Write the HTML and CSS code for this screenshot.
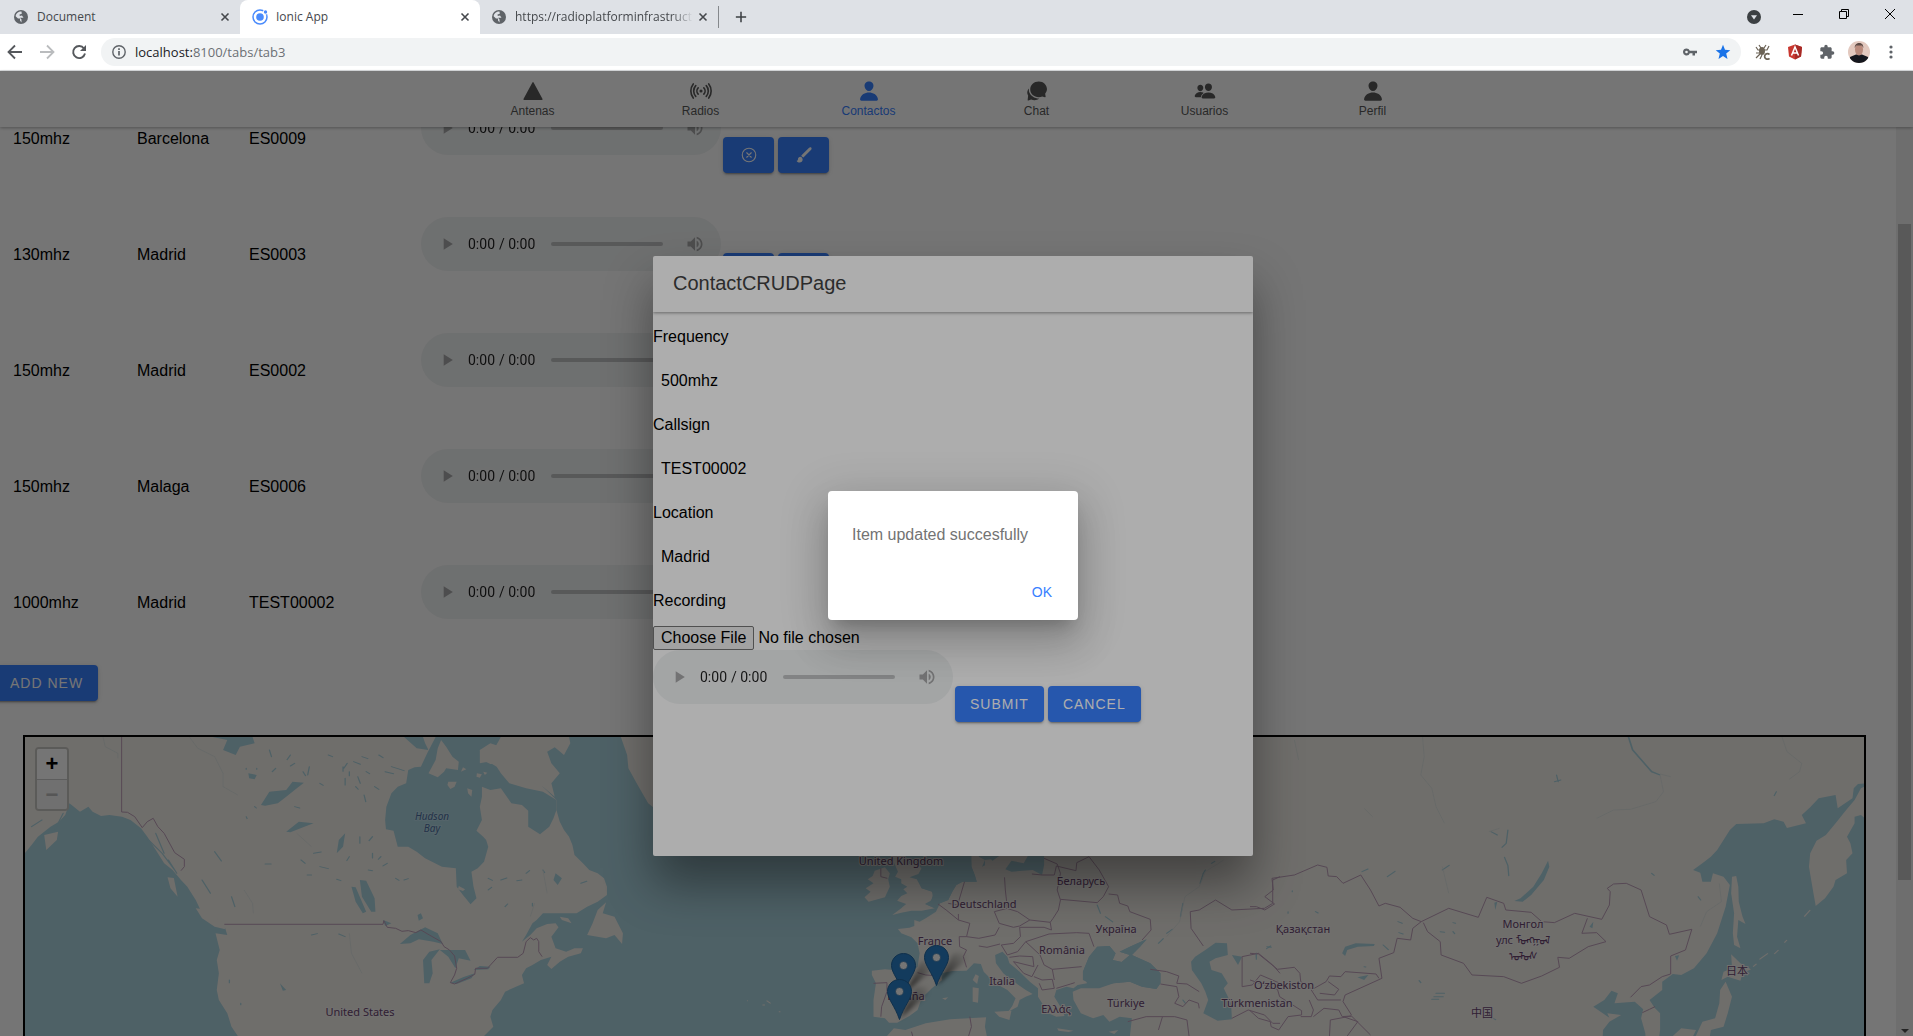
FILE: index.html
```html
<!DOCTYPE html>
<html lang="es">
<head>
<meta charset="utf-8">
<title>Ionic App</title>
<link rel="stylesheet" href="styles.css">
</head>
<body>
<svg class="defs" aria-hidden="true">
  <defs>
    <symbol id="i-globe" viewBox="0 0 14 14"><circle cx="7" cy="7" r="7" fill="#5f6368"/><path d="M7.500 1.500C4.500 1.400 2 3.500 1.600 6.200L4 8.500H6V10.500L7.500 12.500V9.500L6 7.800H9.500L8 5.500L5.800 6L5.500 4.500L7.800 3.800Z" fill="#dee1e6"/></symbol>
    <symbol id="i-x" viewBox="0 0 10 10"><path d="M1.500 1.500L8.500 8.500M8.500 1.500L1.500 8.500" stroke="#45484c" stroke-width="1.600"/></symbol>
    <symbol id="i-person" viewBox="0 0 512 512"><path d="M332.640 64.580C313.180 43.570 286 32 256 32c-30.160 0-57.430 11.500-76.800 32.380-19.580 21.110-29.120 49.800-26.880 80.780C156.760 206.280 203.270 256 256 256s99.160-49.710 103.670-110.820c2.270-30.700-7.330-59.330-27.030-80.600zM432 480H80a31 31 0 01-24.200-11.130c-6.500-7.770-9.120-18.380-7.180-29.110C57.060 392.940 83.400 353.610 124.800 326c36.780-24.510 83.370-38 131.200-38s94.420 13.500 131.200 38c41.400 27.600 67.740 66.930 76.180 113.750 1.940 10.730-.68 21.340-7.180 29.110A31 31 0 01432 480z"/></symbol>
    <symbol id="i-close" viewBox="0 0 512 512"><g fill="none" stroke="currentColor" stroke-width="32" stroke-linecap="round"><circle cx="256" cy="256" r="192"/><path d="M320 320L192 192M192 320L320 192"/></g></symbol>
    <symbol id="i-brush" viewBox="0 0 512 512"><path fill="currentColor" d="M452 37c-18-10-38-3-51 11L186 262c-6 6-8 15-4 22 11 15 27 30 43 39 7 4 15 3 21-3L460 106c18-19 17-54-8-69zM151 308c-37 0-67 30-67 66 0 29-22 43-36 46-4 1-5 6-2 9 24 28 54 43 84 43 49 0 88-38 88-87 0-44-35-77-67-77z"/></symbol>
    <symbol id="i-pin" viewBox="0 0 25 41"><path d="M12.500 .5C5.500 .5 .5 6 .5 12.500C.5 20 8 27 12.500 40.500C17 27 24.500 20 24.500 12.500C24.500 6 19.500 .5 12.500 .5Z" fill="#2a81cb" stroke="#2468a3"/><circle cx="12.500" cy="12.500" r="4" fill="#fff" stroke="#2468a3" stroke-width=".6"/></symbol>
    <linearGradient id="shade" x1="0" x2="1" y1="1" y2="0"><stop offset="0" stop-opacity=".75"/><stop offset="1" stop-opacity="0"/></linearGradient>
    <filter id="soft" x="-20%" y="-20%" width="140%" height="140%"><feGaussianBlur stdDeviation="2"/></filter>
  </defs>
</svg>

<header class="browser">
  <div class="tabstrip">
    <div class="btab"><svg class="fav"><use href="#i-globe"/></svg><span class="btitle">Document</span><button class="bclose" aria-label="Close tab"><svg><use href="#i-x"/></svg></button></div>
    <div class="btab active"><svg class="fav big" viewBox="0 0 16 16"><circle cx="8" cy="8" r="7" fill="none" stroke="#4a8bfc" stroke-width="1.500"/><circle cx="8" cy="8" r="3.800" fill="#4a8bfc"/><circle cx="13.500" cy="3" r="2.600" fill="#fff"/><circle cx="13.500" cy="3" r="1.700" fill="#4a8bfc"/></svg><span class="btitle">Ionic App</span><button class="bclose" aria-label="Close tab"><svg><use href="#i-x"/></svg></button></div>
    <div class="btab last"><svg class="fav"><use href="#i-globe"/></svg><span class="btitle fade">https://radioplatforminfrastructu</span><button class="bclose" aria-label="Close tab"><svg><use href="#i-x"/></svg></button></div>
    <button class="newtab" aria-label="New tab"><svg viewBox="0 0 14 14"><path d="M7 1V13M1 7H13" stroke="#3c4043" stroke-width="1.800"/></svg></button>
    <div class="winbtns">
      <button aria-label="Search tabs"><svg class="s14" viewBox="0 0 14 14"><circle cx="7" cy="7" r="7" fill="#3c4043"/><path d="M4 5.200H10L7 9.400Z" fill="#dee1e6"/></svg></button>
      <button aria-label="Minimize"><svg class="s14" viewBox="0 0 14 14"><path d="M2 7.500H12" stroke="#000"/></svg></button>
      <button aria-label="Restore"><svg class="s14" viewBox="0 0 14 14"><path d="M2.500 4.500H9.500V11.500H2.500ZM4.500 4.500V2.500H11.500V9.500H9.500" fill="none" stroke="#000"/></svg></button>
      <button aria-label="Close"><svg class="s14" viewBox="0 0 14 14"><path d="M2 2L12 12M12 2L2 12" stroke="#000"/></svg></button>
    </div>
  </div>
  <div class="toolbar">
    <button aria-label="Back"><svg class="s16" viewBox="0 0 16 16"><path d="M15 8H2M8 1.500L1.500 8L8 14.500" fill="none" stroke="#55585c" stroke-width="1.800"/></svg></button>
    <button aria-label="Forward"><svg class="s16" viewBox="0 0 16 16"><path d="M1 8H14M8 1.500L14.500 8L8 14.500" fill="none" stroke="#babcbe" stroke-width="1.800"/></svg></button>
    <button aria-label="Reload"><svg class="s16" viewBox="0 0 16 16"><path d="M13 4.500A6 6 0 1 0 14 9.500" fill="none" stroke="#55585c" stroke-width="1.900"/><path d="M15 1V7H9Z" fill="#55585c"/></svg></button>
    <div class="omnibox">
      <svg class="s14" viewBox="0 0 14 14"><circle cx="7" cy="7" r="6.200" fill="none" stroke="#5f6368" stroke-width="1.400"/><path d="M7 6V10.500M7 3.300V5" stroke="#5f6368" stroke-width="1.700"/></svg>
      <span class="url"><b>localhost:</b>8100/tabs/tab3</span>
      <svg class="s14" viewBox="0 0 14 14"><path d="M3.500 3.500A3.500 3.500 0 1 0 6.800 8.200H9.500V10.500H12V8.200H14V5.800H6.800A3.500 3.500 0 0 0 3.500 3.500Z" fill="#5f6368"/><circle cx="3.500" cy="7" r="1.300" fill="#f1f3f4"/></svg>
      <svg class="s16" viewBox="0 0 16 16"><path d="M8 .8L10 5.800L15.300 6.200L11.200 9.600L12.500 14.900L8 12L3.500 14.900L4.800 9.600L.7 6.200L6 5.800Z" fill="#1a73e8"/></svg>
    </div>
    <button aria-label="Extension"><svg class="s16" viewBox="0 0 16 16"><g fill="none" stroke="#6b6255" stroke-width="1.200"><path d="M4 1L6 4M11 1L9 4M1 3L3 6H6M14 2L12 6H9M1 9H5M1 14L5 10M5 15L7 11"/></g><ellipse cx="7" cy="7" rx="3" ry="4" fill="#6b6255"/><path d="M14.500 10.500A2.800 2.800 0 1 0 14.500 14.300" fill="none" stroke="#6b6255" stroke-width="1.700"/></svg></button>
    <button aria-label="Angular DevTools"><svg class="s16" viewBox="0 0 16 16"><path d="M8 .5L15 3L14 12.500L8 15.500L2 12.500L1 3Z" fill="#c9372f"/><path d="M8 .5L15 3L14 12.500L8 15.500Z" fill="#a62a26"/><path d="M4.500 11.500L8 3L11.500 11.500M5.800 9H10.200" fill="none" stroke="#fff" stroke-width="1.500"/></svg></button>
    <button aria-label="Extensions"><svg class="s16" viewBox="0 0 24 24"><path fill="#5f6368" d="M20.500 11H19V7c0-1.100-.9-2-2-2h-4V3.500a2.500 2.500 0 0 0-5 0V5H4c-1.100 0-2 .9-2 2v3.800h1.500a2.700 2.700 0 0 1 0 5.400H2V20c0 1.100.9 2 2 2h3.800v-1.500a2.700 2.700 0 0 1 5.400 0V22H17c1.100 0 2-.9 2-2v-4h1.500a2.500 2.500 0 0 0 0-5z"/></svg></button>
    <button class="profile" aria-label="Profile"><svg class="s22" viewBox="0 0 22 22"><defs><clipPath id="av"><circle cx="11" cy="11" r="11"/></clipPath></defs><g clip-path="url(#av)"><path fill="#e3c9bf" d="M0 0H22V22H0Z"/><path fill="#15161d" d="M1 22L2 16L8 13.500H14L20 16L22 22Z"/><ellipse cx="11" cy="8.500" rx="4" ry="6" fill="#b98a7c"/><path fill="#5d4a45" d="M6.800 7C6 1 16 0 15.300 7L14 4.500H8Z"/></g></svg></button>
    <button aria-label="Menu"><svg class="s16" viewBox="0 0 16 16"><g fill="#5f6368"><circle cx="8" cy="3" r="1.600"/><circle cx="8" cy="8" r="1.600"/><circle cx="8" cy="13" r="1.600"/></g></svg></button>
  </div>
</header>

<div class="app">
  <nav class="tabbar">
    <a href="#antenas"><svg viewBox="0 0 512 512"><path d="M464 464H48a16 16 0 01-14-24l208-384a16 16 0 0128 0l208 384A16 16 0 01464 464z"/></svg>Antenas</a>
    <a href="#radios"><svg viewBox="0 0 512 512"><circle cx="256" cy="256" r="36"/><path fill="none" stroke="currentColor" stroke-width="38" stroke-linecap="round" d="M190 328a104 104 0 010-144M322 328a104 104 0 000-144M134 380a184 184 0 010-248M378 380a184 184 0 000-248M76 420c-75-95-75-233 0-328M436 420c75-95 75-233 0-328"/></svg>Radios</a>
    <a class="on" href="#contactos"><svg><use href="#i-person"/></svg>Contactos</a>
    <a href="#chat"><svg viewBox="0 0 512 512"><path d="M298 32C185 32 98 115 98 215C98 320 185 400 298 400C330 400 355 392 375 382L440 402C452 404 460 398 457 386L446 318C470 288 488 255 488 212C488 112 408 32 298 32Z"/><path d="M68 196C42 226 24 262 30 308C33 330 42 348 50 362L38 464C37 476 46 482 56 478L120 452C180 482 260 474 306 432C200 432 92 368 68 262Z"/></svg>Chat</a>
    <a href="#usuarios"><svg viewBox="0 0 512 512"><path d="M336 256c-20 0-40-9-56-26-15-16-24-38-26-61-2-25 6-47 21-64S312 80 336 80c24 0 45 9 61 25 15 17 23 40 21 64-2 23-11 45-26 61-16 17-36 26-56 26zM468 432H204c-9 0-17-4-22-11-6-7-7-16-5-25 8-34 29-62 60-82 28-17 63-26 99-26 37 0 71 9 99 26 31 19 52 47 60 82 2 9 0 18-5 25-6 7-13 11-22 11zM147 260c-35 0-66-33-69-73-1-21 5-40 18-54 13-13 31-21 51-21s38 8 51 22c13 14 20 33 18 53-3 40-34 73-69 73zM213 291c-18-8-41-12-66-12-30 0-58 7-81 21-25 16-42 39-49 67-2 8 0 16 5 23 4 6 11 10 20 10h111c4 0 7-3 8-7 8-35 28-65 58-86 5-4 5-10-6-16z"/></svg>Usuarios</a>
    <a href="#perfil"><svg><use href="#i-person"/></svg>Perfil</a>
  </nav>

  <div class="scroller">
    <main class="content">
      <table class="contacts">
        <tbody>
          <tr><td>150mhz</td><td>Barcelona</td><td>ES0009</td><td><div class="rec"><audio controls controlslist="nodownload noplaybackrate"></audio><button class="btn icon" aria-label="Delete"><svg><use href="#i-close"/></svg></button><button class="btn icon" aria-label="Edit"><svg><use href="#i-brush"/></svg></button></div></td></tr>
          <tr><td>130mhz</td><td>Madrid</td><td>ES0003</td><td><div class="rec"><audio controls controlslist="nodownload noplaybackrate"></audio><button class="btn icon" aria-label="Delete"><svg><use href="#i-close"/></svg></button><button class="btn icon" aria-label="Edit"><svg><use href="#i-brush"/></svg></button></div></td></tr>
          <tr><td>150mhz</td><td>Madrid</td><td>ES0002</td><td><div class="rec"><audio controls controlslist="nodownload noplaybackrate"></audio><button class="btn icon" aria-label="Delete"><svg><use href="#i-close"/></svg></button><button class="btn icon" aria-label="Edit"><svg><use href="#i-brush"/></svg></button></div></td></tr>
          <tr><td>150mhz</td><td>Malaga</td><td>ES0006</td><td><div class="rec"><audio controls controlslist="nodownload noplaybackrate"></audio><button class="btn icon" aria-label="Delete"><svg><use href="#i-close"/></svg></button><button class="btn icon" aria-label="Edit"><svg><use href="#i-brush"/></svg></button></div></td></tr>
          <tr><td>1000mhz</td><td>Madrid</td><td>TEST00002</td><td><div class="rec"><audio controls controlslist="nodownload noplaybackrate"></audio><button class="btn icon" aria-label="Delete"><svg><use href="#i-close"/></svg></button><button class="btn icon" aria-label="Edit"><svg><use href="#i-brush"/></svg></button></div></td></tr>
        </tbody>
      </table>
      <button class="btn add">ADD NEW</button>

      <div class="map">
        <svg class="world" viewBox="25 737 1839 340">
          <path class="sea" d="M25 737H1864V1077H25Z"/>
          <!-- North America and Greenland -->
          <g transform="translate(0 640) scale(.4209 .3333)">
            <path class="land" d="M59 291H1200L1190 320L1215 345L1225 370L1260 400L1290 440L1322 480L1322 510L1330 545L1340 570L1352 590L1360 615L1365 645L1385 670L1400 690L1420 700L1435 715L1442 740L1442 765L1420 785L1395 800L1370 820H1290L1275 840L1265 850L1250 885L1240 905L1260 885L1275 865L1300 852L1320 850L1327 862L1310 890L1320 925L1345 935L1365 925L1385 925L1380 940L1350 950L1330 965L1310 987L1300 975L1310 950L1285 960L1265 975L1250 985L1240 1005L1245 1030L1200 1055L1190 1080L1170 1110L1165 1130L1172 1160L1150 1188L1110 1320H640L580 1250L565 1188L550 1160L540 1120L520 1080L515 1050L520 1000L515 960L522 930L512 880L540 885L535 865L500 850L480 820L465 780L445 740L430 720L410 690L390 670L375 640L360 610L350 590L335 565L310 540L290 530L260 525L240 528L220 515L210 500L190 515L165 490L155 525L140 545L120 560L90 590L75 615L59 640Z"/>
            <path class="sea" d="M1035 291L1015 340L1000 380L985 382L970 390L965 430L945 440L930 460L918 500L915 540L917 568L935 572L945 620L970 620L990 635L1010 655L1050 680L1083 685L1085 740L1100 765L1118 793L1132 775L1125 740L1120 695L1135 685L1150 665L1160 620L1155 600L1148 590L1132 572L1145 540L1140 500L1145 470L1145 440L1165 450L1190 445L1215 490L1240 495L1255 512L1255 560L1283 583L1305 560L1315 535L1322 510V480L1290 455L1250 445L1210 430L1190 400L1180 380L1160 365L1140 370L1140 330L1165 310L1190 320V291ZM960 291L990 325L1018 330L1010 310L1005 291Z"/>
            <path class="land" d="M1048 300L1060 320L1075 350L1090 365L1088 390L1060 385L1055 395L1040 412L1018 400L1035 360L1040 325ZM1065 425L1085 425L1080 440L1070 447L1063 435ZM1110 445L1122 450L1120 470L1112 460ZM1133 400L1145 403L1140 413L1132 410ZM1148 395L1158 398L1152 405ZM1100 382L1108 388L1095 395ZM1190 291L1175 325L1140 330L1145 360L1165 372L1195 370L1220 390L1250 420L1290 440L1318 470L1310 430L1330 400L1310 370L1300 335L1318 322L1340 345L1355 310L1352 291ZM1090 738L1105 748L1100 753L1088 748ZM465 805L485 808L510 830L530 850L535 868L510 860L480 835ZM398 712L413 714L422 770L405 745ZM1440 787L1432 820L1460 830L1480 880L1478 912L1460 885L1440 895L1395 885L1408 850L1420 810ZM1350 835L1330 830L1335 840L1358 850ZM105 585L138 575L135 600L110 630Z"/>
            <path class="land" d="M1475 291L1490 345L1493 385L1515 435L1540 490L1560 510H1800V291Z"/>
            <path class="sea" d="M505 291L540 300L530 330L560 345L570 320L605 310L600 291ZM590 400L610 405L605 418L592 415ZM620 495L640 455L680 450L695 425L722 428L700 450L680 470L660 490L630 497ZM680 575L710 545L745 550L720 562L690 577ZM855 720L870 722L890 775L892 815L882 815L860 770ZM835 740L845 742L870 815L862 820L845 785ZM950 912L975 885L1010 862L1040 880L1052 912L1030 905L995 898L975 910ZM1008 1030L1005 960L1020 935L1045 928L1025 960L1028 1000L1020 1030ZM1045 930L1105 930L1118 962L1090 955L1082 985L1065 950ZM1070 1028L1100 1012L1128 1000L1120 1015L1085 1032ZM1125 990L1140 978L1165 980L1160 988ZM992 825L1000 820L1005 835L995 842ZM665 1030L680 1050L672 1052ZM800 640L805 600L820 580L815 620ZM910 840L930 850L915 858ZM1315 720L1320 700L1335 715L1325 735Z"/>
            <path class="speck" d="M640 330l5 20M690 345l-8 14M735 380l-4 25M820 415v20M825 370l-8 15M850 410l6 20M870 395l8 6M720 395l6 12M780 345l10 5M860 350l14 6M930 380l30 12M915 395l20 6M890 440l10 8M865 465l4 20M700 500l12 4M510 635l16 28M630 672h14M715 660l10 10M760 680l20 6M830 650l-6 12M855 590v20M885 590l-8 12M885 640v14M905 650l-6 8M745 640l18-4M730 705h10M800 718l10 4M875 690l10 2M920 670l-10 8M940 715l8 6M960 720l10-4M1160 715l10 6M1190 720l14-6M1250 700l8-8M1160 750l8-8M1200 800l6-8M1265 790v8M1240 720l-12 2M1290 690l4 8M1380 730l14-6M805 882l15 8M740 885l14-4M545 1020v8M572 1090v4M585 530l2 6M605 500l4 4M610 385v3M585 385v3M840 365l16 8M900 345l10 8M345 590l40 50M370 580l20 60M385 640l30 50M400 660l20 40M75 560l25-20M130 570l20-50M480 720l20 40M550 770l8 30M815 380v14M830 395v12M845 440l6 8M700 370l-10 8M655 385l-8 10M760 430l8 6"/>
            <path class="river" d="M245 291L250 320L280 340V355M450 291L470 325L510 350L530 400L530 440L565 465M580 750L600 790L602 820M830 880L835 940L860 1000M1290 690L1300 760M1270 790L1260 830M705 580L740 620"/>
            <path class="border" d="M289 291V516L303 517L320 530L338 563L350 545L364 535L375 560L390 580L415 638L438 658V680L430 692M533 853H910L912 842L920 862L940 865L955 874L970 872L988 878L1000 870L1020 885L1048 905L1055 920L1068 930L1080 948L1085 985L1080 1005L1070 1028L1080 1032L1110 1015L1128 1003L1130 985H1158L1182 952H1230L1243 940L1250 905L1260 893L1268 900L1275 895L1280 905V935L1288 950"/>
          </g>
          <!-- Europe, North Africa and western Asia -->
          <g transform="translate(640 840) scale(.4082 .3333)">
            <path class="land" d="M3000-320H640V48L650 75L672 68L690 85L682 102L660 112L678 118L690 145L715 155L718 168L712 182L698 192L722 205L690 212L665 212L640 218L618 225L640 205L652 192L630 182L640 168L655 160L645 148L655 140L640 130L640 118L625 110L632 95L626 78L615 48H810L812 80L820 105L825 125L790 125L775 135L765 155L755 180L735 190L725 215L700 235L685 245L672 240L672 258L660 263L632 267L640 280L665 292L680 310L685 340L680 380L668 392L640 392L600 388L568 392L568 405L578 430L572 480V530L600 535L610 548L630 548L660 528L680 510L690 475L715 445L740 420L738 400L765 393L800 392L818 370L835 372L842 395L870 430L900 450L920 475L912 498L902 515L925 500L930 480L945 470L962 462L945 450L910 420L890 400L872 370L870 345L888 335L900 350L905 370L930 395L955 425L975 445L975 470L985 490L1000 520L1020 530L1040 528L1035 510L1030 500L1015 470L1020 450L1045 440L1062 445L1072 435L1095 430L1085 395L1100 350L1120 320L1150 318L1165 340L1158 360L1180 366L1200 345L1175 335L1200 320L1240 298L1225 320L1205 345L1250 370L1275 400L1275 430L1265 447L1230 440L1200 425L1160 430L1125 445L1080 445L1060 455L1062 480L1080 520L1110 535L1135 525L1150 545L1175 530L1205 535L1200 590L1195 700H3000Z"/>
            <path class="sea" d="M640-60V48L648 66L672 60L690 48H812V-60ZM975-10L950 48L940 70L910 62L895 88L910 95L962 90L985 105L990 75V-10ZM835-10L830 50L845 60L838 80L855 70L880 48L890 40ZM1205 345L1250 370L1275 400L1275 430L1265 447L1230 440L1200 425L1160 430L1120 442L1085 420L1085 395L1100 350L1120 320L1150 318L1165 340L1158 360L1180 366L1200 345L1175 335L1200 320L1242 298L1225 320ZM1385 330L1410 308L1438 310L1440 345L1410 355L1395 365L1400 390L1425 400L1440 430L1430 445L1448 490L1450 538L1415 542L1380 520L1392 480L1385 455L1375 430L1352 390L1350 365L1360 350ZM1450 345L1475 350L1465 375Z"/>
            <path class="sea" d="M690 40H812V80L820 105L825 125L790 125L775 135L765 155L755 180L735 190L722 205L700 192L715 182L718 155L690 145L680 118L690 85Z"/>
            <path class="land" d="M575 92L600 82L612 100L608 118L612 140L600 172L560 185L550 172L565 155L553 145L572 130L558 118L570 108ZM822 403L830 408L826 432L815 420ZM815 442L830 445L828 488L815 485ZM868 515L910 512L905 540L880 530ZM1022 565L1062 572L1050 576L1025 572ZM1148 575L1172 570L1162 582ZM740 475L755 472L748 480ZM845 60L860 58L872 75L860 88L845 78ZM605 588L622 565L650 570L700 550L760 538L848 532L845 560L850 590L840 640H560Z"/>
            <path class="speck" d="M1380 100l-8 30M1400 70l8-6M1385 90l-6 12M1330 190l-6 40M1290 280l14-12M1270 310l12-14M1545 318l-10 8M1120 195l8 25M1140 230l18 16M1510 340v12M1330 480l6 10"/>
            <path class="isle" d="M320 490l-10-8M300 495h6M340 515h4M262 482h2"/>
            <path class="river" d="M1430 60L1385 95L1370 140L1335 170L1322 245L1290 290"/>
            <path class="border" d="M590 85V110L606 115M730 192L750 210L780 240V222M755 190L778 195L795 125M780 240L808 250L800 290H782L783 320L800 330L792 350L800 382M800 290L830 295L870 285L880 262M893 112L895 150L900 205L868 215L880 250L915 262L930 258L955 240L925 215L898 205M955 240L1005 247L1012 235L1025 210L1030 180L1022 150L1030 100L1022 72L990 55M960 102L985 105H1015L1020 78L1068 92L1070 68L1100 50L1125 90L1148 140L1135 170L1120 188L1030 178M1148 162L1170 165L1175 190L1195 198L1200 215L1250 238L1252 270L1230 300M1005 247L1008 270L990 262L930 262L932 290L915 310L885 315L900 345L925 335L945 305L1002 282L1070 278L1100 280L1112 320M945 305L980 345L990 375L1010 388L1082 380M905 352L930 348L962 350L965 380L915 365L940 400L960 410L975 375M965 410L985 420L1010 418L1015 445L985 450L978 430M1010 388L1015 420M1020 445L1055 432L1065 428M830 318L850 322L882 312M680 398L700 405L735 408M572 430L605 428V455L592 500L590 530M1250 388L1290 395L1320 408L1315 430L1340 432L1370 455M1275 432L1315 440L1320 470L1310 490L1330 500L1345 480L1368 490L1370 505M1195 545L1240 530L1310 530L1340 540L1345 588M1280 530L1270 570M808 530L812 560L805 588M665 575L668 588M1380 318L1350 265L1348 215L1370 210L1410 180L1450 210L1530 205L1550 190V120L1568 110M1475 440V350L1515 340L1550 375L1568 400M1475 440L1500 435L1520 405L1568 430M1450 535L1490 510L1530 525L1550 550H1568"/>
          </g>
          <!-- Siberia, Mongolia and the Pacific coast -->
          <g transform="translate(1250 720) scale(.4228 .3333)">
            <path class="sea" d="M1460 190L1438 192L1428 205L1425 235L1390 265L1385 225L1345 235L1325 262L1305 285L1315 310L1270 324L1262 305L1240 298L1215 310L1150 312L1135 330L1120 360L1105 390L1090 410L1070 430L1048 450L1065 458L1070 485L1090 485L1095 460L1120 470L1135 495L1125 560L1105 640L1080 700L1050 745L1020 765L1000 762L975 785L975 810L945 840L958 865L970 880L970 930L955 1070H1460ZM830 1070L835 930L850 905L878 885L845 880L850 893L812 860L838 840L855 812L870 820L862 850L910 845L930 868L925 895L935 940L940 1070Z"/>
            <path class="land" d="M1460 195L1445 205L1430 240L1410 270L1385 310L1362 345L1340 362L1325 400L1322 440L1330 500L1338 558L1360 535L1380 500L1385 480L1412 460L1410 420L1425 400L1420 370L1412 350L1430 310V290L1445 285L1460 300ZM1140 470L1150 468L1155 500L1156 545L1165 590L1172 612L1155 600L1152 650L1160 685L1145 675L1142 640L1145 580L1138 520ZM1138 703L1160 730L1185 748L1165 760L1160 782L1130 770L1115 780L1120 755L1140 745ZM1125 785L1140 830L1130 880L1120 920L1090 930L1085 970L1050 960L1070 905L1100 895L1110 850L1112 810ZM1000 948L1020 925L1055 930L1040 970H1000Z"/>
            <path class="sea" d="M705 422L708 440L695 480L665 525L645 545L625 543L640 535L670 500L690 460ZM218 700L225 680L250 670L295 672L293 678L255 680L230 690L225 708ZM254 772L280 765L270 780ZM578 548L585 545L580 570ZM1005 708L1015 706L1010 722ZM803 620L812 605L810 625Z"/>
            <path class="speck" d="M602 412l8 25l2 30M610 330l-4 40l-10 12M570 335l15 10M725 165l4 20M735 180l-15 5M950 460l6 6M440 820h20M435 830h22M430 838h16M575 895l6 4M350 605l10 5M352 638l10 4M480 608l6 2M480 635l4 6M450 635l10 2M315 675l12 14M325 470l18-16M265 455l14-8M455 450l16-14M40 680l10 2M15 700v18M155 575l6 4M100 515v-3M90 575v5M270 740l4 1M400 782l4 6M1245 215l-5 12M1060 530l6 10"/>
            <path class="isle" d="M1225 700l-20 18M1250 690l-10 12M1325 570l-14 20M1270 660l-6 8M1190 740l8-8"/>
            <path class="water-line" d="M895 50L905 90L950 155L970 165"/>
            <path class="river" d="M408 50L412 110L404 165L430 205L440 260L460 310M970 165L978 215L960 245L900 268L860 270L820 295M970 162L995 170M1258 50L1270 95L1305 130L1300 155L1275 178M455 440L470 520M590 325L565 335M105 60L115 120M270 265L290 290M1110 490L1115 545L1080 575L1065 620"/>
            <path class="border" d="M0 560H15L35 570L58 552L35 530L55 510L52 475L105 465L160 435L182 442L185 468L205 470L220 490L262 465L285 510L305 558L320 550L355 562L385 595L405 605L470 565L540 592L560 532L600 550L605 570L665 577L690 605L720 608L768 580L832 598L850 555L852 515L845 505L860 492L890 490L925 510L945 590L985 615L992 643L1045 628L1030 690L995 708V762L975 770L945 795L925 800L900 832M405 605L385 625L380 660L348 655L340 698L305 715L312 775L225 825L220 845L240 885M410 608L420 635L450 665L452 705L505 730L525 765L600 770L642 790L690 768L732 742L728 712L755 715L800 680L842 665L820 638L785 640L798 595M305 775L298 762L225 755L215 770L188 768L180 785L145 810L160 840H215M185 785L210 808L200 825L165 820M0 700L20 702L65 748L105 742L118 760L120 785L150 810M0 780L65 808L70 830L122 872V885L90 890L68 930L50 920L48 905L20 895L0 872M140 840L150 870L145 890H120M150 890L175 865L210 870L218 890L240 888L190 900L188 948M240 888L285 945M958 860L945 868L928 878M220 890L255 905L230 948"/>
          </g>
          <g class="labels">
            <text class="water" x="432" y="820">Hudson</text><text class="water" x="432" y="832">Bay</text>
            <text x="360" y="1016">United States</text>
            <text x="901" y="865">United Kingdom</text>
            <text x="1081" y="885">Беларусь</text>
            <text x="984" y="908">Deutschland</text>
            <text x="1116" y="933">Україна</text>
            <text x="935" y="945">France</text>
            <text x="1062" y="954">România</text>
            <text x="1002" y="985">Italia</text>
            <text x="906" y="1000">España</text>
            <text x="1126" y="1007">Türkiye</text>
            <text x="1056" y="1013">Ελλάς</text>
            <text x="1303" y="933">Қазақстан</text>
            <text x="1284" y="989">Oʻzbekiston</text>
            <text x="1257" y="1007">Türkmenistan</text>
            <text x="1523" y="928">Монгол</text>
            <text x="1523" y="944">улс ᠮᠣᠩᠭᠣᠯ</text>
            <text x="1523" y="960">ᠤᠯᠤᠰ</text>
            <text x="1482" y="1017">中国</text>
            <text x="1737" y="975">日本</text>
          </g>
          <g>
            <path d="M905 993L921 962Q938 958 932 970Z" fill="url(#shade)" filter="url(#soft)"/>
            <path d="M937 985L953 954Q970 950 964 962Z" fill="url(#shade)" filter="url(#soft)"/>
            <path d="M900 1018L916 987Q933 983 927 995Z" fill="url(#shade)" filter="url(#soft)"/>
            <use href="#i-pin" x="891" y="953" width="25" height="41"/>
            <use href="#i-pin" x="924" y="945" width="25" height="41"/>
            <use href="#i-pin" x="887" y="979" width="25" height="41"/>
          </g>
        </svg>
        <div class="zoom"><button aria-label="Zoom in">+</button><button aria-label="Zoom out" disabled>−</button></div>
      </div>
    </main>
    <div class="scrollbar" aria-hidden="true"><i class="gap"></i><i class="thumb"></i><i class="rest"></i><i class="arrow"></i></div>
  </div>

  <div class="overlay">
    <section class="modal" role="dialog" aria-labelledby="mt">
      <header><h1 id="mt">ContactCRUDPage</h1></header>
      <form onsubmit="return false">
        <label for="f">Frequency</label><input type="text" id="f" value="500mhz">
        <label for="c">Callsign</label><input type="text" id="c" value="TEST00002">
        <label for="l">Location</label><input type="text" id="l" value="Madrid">
        <label for="r">Recording</label><input type="file" id="r">
        <div class="rec"><audio controls controlslist="nodownload noplaybackrate"></audio><button class="btn">SUBMIT</button><button class="btn">CANCEL</button></div>
      </form>
    </section>
  </div>

  <div class="overlay top">
    <section class="alert" role="alertdialog" aria-labelledby="am">
      <p id="am">Item updated succesfully</p>
      <button>OK</button>
    </section>
  </div>
</div>
</body>
</html>
```
FILE: styles.css
```css
* { box-sizing: border-box; }
body {
  margin: 0;
  height: 100vh;
  overflow: hidden;
  display: flex;
  flex-direction: column;
  font: 16px/20px "Liberation Sans", Arial, sans-serif;
  color: #000;
}
button { font: inherit; border: 0; padding: 0; background: none; }
svg { display: block; flex: none; }
.defs { position: absolute; width: 0; height: 0; }
.s14 { width: 14px; height: 14px; }
.s16 { width: 16px; height: 16px; }
.s22 { width: 22px; height: 22px; }

/* browser frame */
.browser { flex: none; font-family: "Open Sans", "Noto Sans", sans-serif; font-size: 12px; }
.tabstrip { display: flex; height: 34px; background: #dee1e6; }
.btab { display: flex; align-items: center; width: 240px; padding: 0 10px 0 14px; gap: 9px; color: #45484c; }
.btab.active { background: #fff; border-radius: 8px 8px 0 0; padding-left: 12px; gap: 8px; }
.btab.last { width: 239px; padding-left: 12px; border-right: 1px solid #85888c; border-image: linear-gradient(#dee1e6 7px, #85888c 7px 27px, #dee1e6 27px) 1; }
.fav { width: 14px; height: 14px; }
.fav.big { width: 16px; height: 16px; }
.btitle { flex: 1; white-space: nowrap; overflow: hidden; }
.btitle.fade { margin-right: -4px; -webkit-mask-image: linear-gradient(90deg, #000 88%, transparent); mask-image: linear-gradient(90deg, #000 88%, transparent); }
.bclose svg { width: 10px; height: 10px; }
.newtab { padding: 0 16px; }
.newtab svg { width: 12px; height: 12px; }
.winbtns { display: flex; margin-left: auto; }
.winbtns button { width: 46px; height: 28px; display: grid; place-items: center; }
.winbtns button:first-child { width: 42px; height: 34px; }
.toolbar { display: flex; align-items: center; gap: 16px; height: 37px; padding: 0 14px 0 7px; background: #fff; border-bottom: 1px solid #dcdee0; }
.omnibox { flex: 1; display: flex; align-items: center; gap: 18px; height: 28px; margin: 0 -2px; padding: 0 10px 0 11px; border-radius: 14px; background: #f1f3f4; }
.url { flex: 1; margin-left: -9px; font-size: 13px; color: #6c7075; }
.url b { font-weight: 400; color: #202124; }
.profile { margin: 0 -3px; }

/* app shell */
.app { position: relative; flex: 1; min-height: 0; display: flex; flex-direction: column; background: #fff; }
.tabbar {
  position: relative;
  z-index: 1;
  flex: none;
  display: flex;
  justify-content: center;
  height: 56px;
  padding-right: 8px;
  background: #fff;
  box-shadow: 0 1px 3px rgba(0,0,0,.3);
}
.tabbar a {
  flex: 0 1 168px;
  display: flex;
  flex-direction: column;
  align-items: center;
  gap: 1px;
  padding-top: 9px;
  font-size: 12px;
  line-height: 16px;
  color: #595959;
  fill: currentColor;
  text-decoration: none;
}
.tabbar a.on { color: #3880ff; }
.tabbar svg { width: 22px; height: 22px; }
.scroller { flex: 1; min-height: 0; display: grid; grid-template-columns: 1fr 17px; overflow: hidden; }
.content { min-width: 0; overflow: hidden; }
.scrollbar { display: flex; flex-direction: column; align-items: center; background: #f1f1f1; }
.gap { flex: 97; }
.thumb { flex: 655; width: 13px; background: #c1c1c1; }
.rest { flex: 149; }
.arrow { margin-bottom: 3px; border: 4px solid transparent; border-top-color: #505050; border-bottom: 0; }

/* contact list, scrolled partly under the tab bar */
.contacts { border-collapse: collapse; margin-top: -47px; }
.contacts tr { height: 116px; }
.contacts td { padding: 2px 0 0; }
.contacts td:nth-child(1) { padding-left: 13px; width: 137px; }
.contacts td:nth-child(2) { width: 112px; }
.contacts td:nth-child(3) { width: 172px; }
.contacts td:nth-child(4) { vertical-align: top; padding-top: 21px; }
.rec { display: flex; align-items: flex-start; }
.rec audio { width: 300px; height: 54px; margin-right: 2px; }
.rec .btn { margin: 36px 4px 0 0; }
.btn {
  height: 36px;
  padding: 0 15px;
  border-radius: 4px;
  background: #3880ff;
  color: #fff;
  font-size: 14px;
  line-height: 36px;
  letter-spacing: 1px;
  box-shadow: 0 3px 1px -2px rgba(0,0,0,.2), 0 2px 2px rgba(0,0,0,.14), 0 1px 5px rgba(0,0,0,.12);
}
.btn.icon { width: 51px; display: grid; place-items: center; }
.btn.icon svg { width: 18px; height: 18px; }
.btn.add { display: block; margin: 5px 0 0 -5px; }

/* map */
.map { position: relative; margin: 34px 30px 0 23px; border: 2px solid #000; }
.world { width: 100%; height: auto; }
.sea { fill: #aad3df; }
.land { fill: #f2efe9; }
.speck { fill: none; stroke: #aad3df; stroke-width: 3; stroke-linecap: round; }
.isle { fill: none; stroke: #f2efe9; stroke-width: 3; }
.water-line { fill: none; stroke: #aad3df; stroke-width: 4; }
.river { fill: none; stroke: #dde3e2; stroke-width: 2; }
.border { fill: none; stroke: #bd9fb9; stroke-width: 1; stroke-linejoin: round; vector-effect: non-scaling-stroke; }
.labels text {
  font: 11px "Noto Sans", "Noto Sans CJK SC", sans-serif;
  text-anchor: middle;
  fill: #6a4670;
  stroke: #f6f3f2;
  stroke-width: 2px;
  paint-order: stroke;
}
.labels .water { font-size: 10px; font-style: italic; fill: #4d6fa0; stroke: #b8dbe6; }
.zoom { position: absolute; left: 10px; top: 10px; border: 2px solid #c8c6c1; border-radius: 4px; overflow: hidden; }
.zoom button { display: block; width: 30px; height: 30px; background: #fff; font: bold 22px/30px "Liberation Sans", sans-serif; color: #000; }
.zoom button + button { border-top: 1px solid #ccc; background: #f4f4f4; color: #bbb; }

/* dialogs */
.overlay {
  position: absolute;
  inset: 0;
  z-index: 2;
  display: grid;
  place-items: center;
  padding: 5px 7px 0 0;
  background: rgba(0,0,0,.32);
}
.overlay.top { padding-top: 3px; }
.modal { width: 600px; height: 600px; border-radius: 2px; overflow: hidden; background: #fff; box-shadow: 0 28px 48px rgba(0,0,0,.4); }
.modal header { height: 56px; padding: 0 20px; box-shadow: 0 1px 3px rgba(0,0,0,.4); }
.modal h1 { margin: 0; font-size: 20px; line-height: 54px; font-weight: 500; color: #424242; }
.modal form { padding-top: 3px; }
.modal label { display: block; line-height: 44px; }
.modal input { display: block; width: 100%; font: inherit; color: #000; }
.modal input[type="text"] { height: 44px; padding: 0 8px; border: 0; background: none; }
.modal input[type="file"] { height: 24px; margin-top: 3px; }
.modal input::file-selector-button { font: inherit; height: 24px; padding: 0 7px; border: 1px solid #767676; border-radius: 2px; background: #efefef; }
.alert { width: 250px; border-radius: 4px; background: #fff; display: flex; flex-direction: column; align-items: flex-end; box-shadow: 0 11px 15px -7px rgba(0,0,0,.2), 0 24px 38px 3px rgba(0,0,0,.14), 0 9px 46px 8px rgba(0,0,0,.12); }
.alert p { align-self: stretch; margin: 0; padding: 34px 24px 29px; color: #737373; }
.alert button { height: 36px; margin: 0 16px 10px 0; padding: 0 10px; font-size: 14px; color: #3880ff; }
```
